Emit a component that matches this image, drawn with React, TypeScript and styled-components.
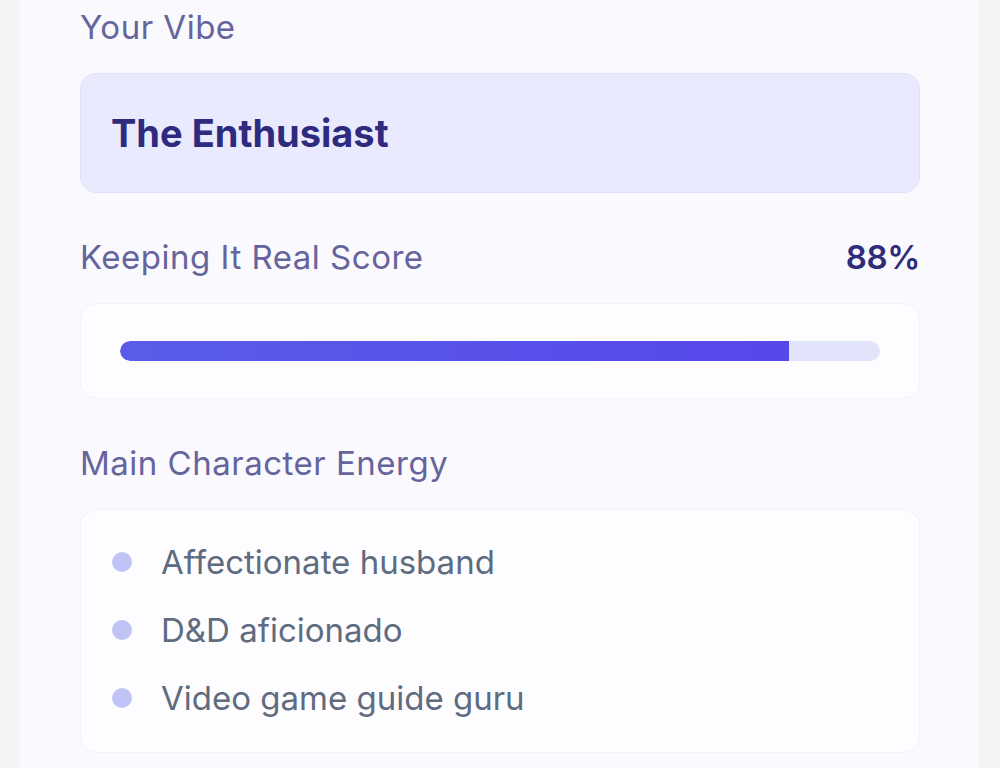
import React, { FC } from "react";
import styled, { createGlobalStyle } from "styled-components";

const GlobalStyle = createGlobalStyle`
  html, body {
    margin: 0;
    padding: 0;
    background: #f4f4f5;
    font-family: "Inter", "Noto Sans", sans-serif;
  }
`;

interface Trait {
  id: string;
  label: string;
}

const traits: Trait[] = [
  { id: "t1", label: "Affectionate husband" },
  { id: "t2", label: "D&D aficionado" },
  { id: "t3", label: "Video game guide guru" },
];

const score = 88;

const ScoreBar: FC<{ value: number }> = ({ value }) => (
  <BarTrack>
    <BarFill style={{ width: `${value}%` }} />
  </BarTrack>
);

const App: FC = () => {
  return (
    <>
      <GlobalStyle />
      <Page>
        <Panel>
          <Section>
            <Label>Your Vibe</Label>
            <VibeBox>
              <VibeTitle>The Enthusiast</VibeTitle>
            </VibeBox>
          </Section>

          <Section>
            <LabelRow>
              <Label>Keeping It Real Score</Label>
              <ScoreValue>{score}%</ScoreValue>
            </LabelRow>
            <WhiteCard $pad="37px 39px">
              <ScoreBar value={score} />
            </WhiteCard>
          </Section>

          <Section>
            <Label>Main Character Energy</Label>
            <WhiteCard $pad="18px 30px 20px 31px">
              <TraitList>
                {traits.map((t) => (
                  <TraitItem key={t.id}>
                    <Dot />
                    <span>{t.label}</span>
                  </TraitItem>
                ))}
              </TraitList>
            </WhiteCard>
          </Section>
        </Panel>
      </Page>
    </>
  );
};

const Page = styled.div`
  width: 1000px;
  height: 768px;
  overflow: hidden;
  padding: 0 21px 0 20px;
  box-sizing: border-box;
  background: #f4f4f5;
`;

const Panel = styled.div`
  height: 100%;
  background: #f9f9fe;
  padding: 7px 59px 0 60px;
  display: flex;
  flex-direction: column;
  gap: 44px;
  box-sizing: border-box;
`;

const Section = styled.section`
  display: flex;
  flex-direction: column;
  gap: 26px;
`;

const Label = styled.div`
  font-size: 33px;
  line-height: 40px;
  font-weight: 400;
  color: #66649c;
  letter-spacing: 0.5px;
`;

const LabelRow = styled.div`
  display: flex;
  justify-content: space-between;
  align-items: center;
`;

const ScoreValue = styled.div`
  font-size: 33px;
  line-height: 40px;
  font-weight: 600;
  color: #2f2c7a;
  letter-spacing: -0.4px;
`;

const VibeBox = styled.div`
  height: 120px;
  box-sizing: border-box;
  display: flex;
  align-items: center;
  padding: 0 30px;
  background: #e9eafd;
  border: 1px solid #dfe0f9;
  border-radius: 16px;
`;

const VibeTitle = styled.h2`
  margin: 0;
  font-size: 38px;
  font-weight: 700;
  color: #2e2a7e;
  letter-spacing: 0;
`;

const WhiteCard = styled.div<{ $pad: string }>`
  background: #fdfdff;
  border: 1px solid #f1f2fb;
  border-radius: 16px;
  padding: ${(p) => p.$pad};
  box-sizing: border-box;
`;

const BarTrack = styled.div`
  height: 20px;
  border-radius: 10px;
  background: #e1e4fb;
  overflow: hidden;
`;

const BarFill = styled.div`
  height: 100%;
  background: linear-gradient(90deg, #5a5ce9, #5548ea);
  border-radius: 10px 0 0 10px;
`;

const TraitList = styled.ul`
  list-style: none;
  margin: 0;
  padding: 0;
`;

const TraitItem = styled.li`
  display: flex;
  align-items: center;
  gap: 29px;
  height: 68px;
  font-size: 33px;
  line-height: 40px;
  color: #5f6b7f;
`;

const Dot = styled.span`
  width: 20px;
  height: 20px;
  border-radius: 50%;
  background: #c0c3f6;
  flex-shrink: 0;
`;

export default App;
